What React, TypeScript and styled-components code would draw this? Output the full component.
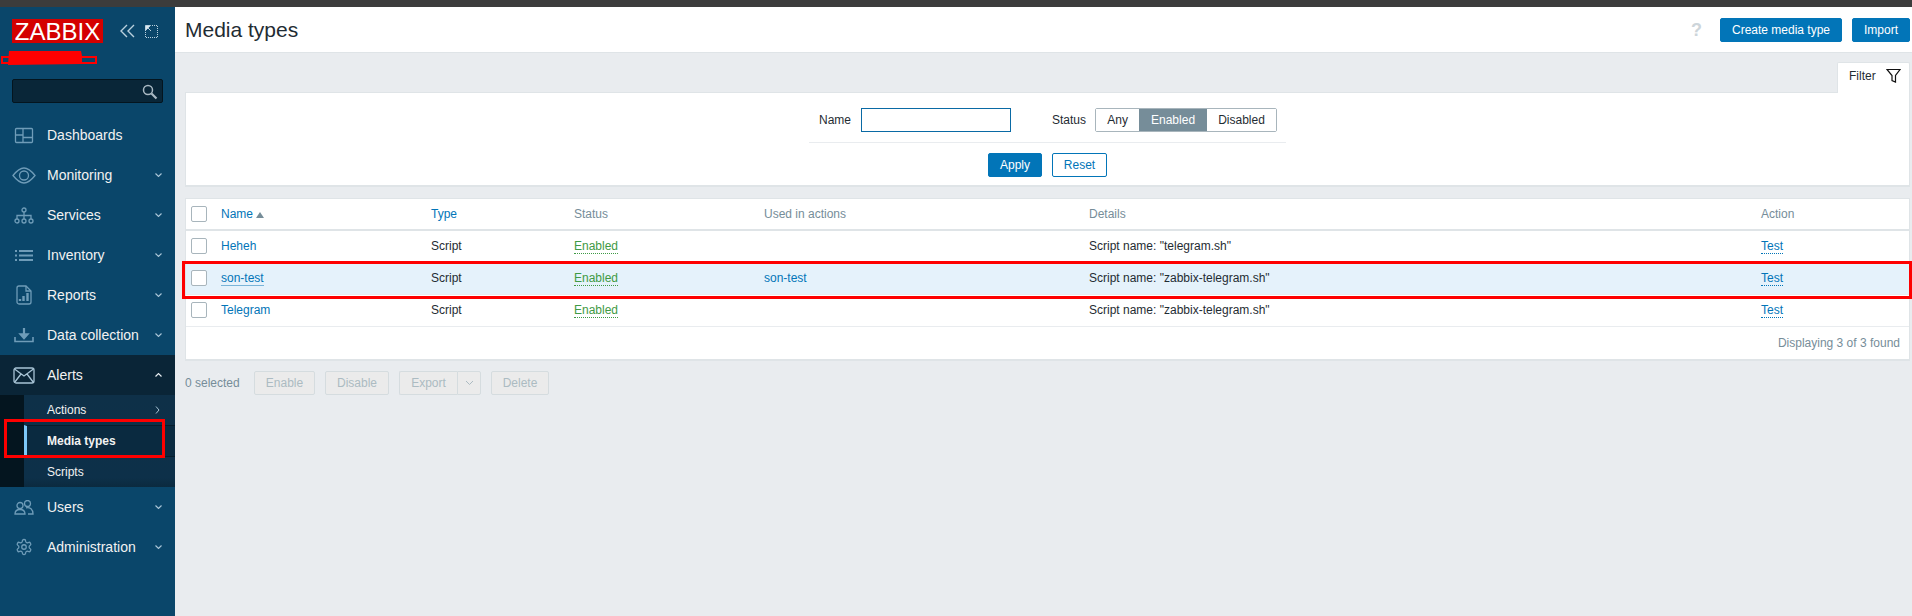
import React from "react";
import styled, { createGlobalStyle } from "styled-components";

const Global = createGlobalStyle`
  html, body { margin: 0; padding: 0; height: 100%; background: #e9ecef; }
  body { font-family: "Liberation Sans", Arial, sans-serif; font-size: 12px; color: #1f2c33; }
  * { box-sizing: border-box; }
`;

const Page = styled.div`
  position: relative;
  width: 1912px;
  height: 616px;
  display: flex;
  flex-direction: column;
  overflow: hidden;
`;
const TopStrip = styled.div`
  height: 7px;
  flex: none;
  background: #3c3c3c;
`;
const Body = styled.div`
  flex: 1;
  display: flex;
  min-height: 0;
`;

/* Sidebar */
const Sidebar = styled.aside`
  width: 175px;
  flex: none;
  background: #0a466a;
  display: flex;
  flex-direction: column;
`;
const Brand = styled.div`
  height: 72px;
  padding: 12px 12px 0;
  display: flex;
  align-items: flex-start;
`;
const Logo = styled.div`
  width: 91px;
  height: 24px;
  background: #d40000;
  color: #fff;
  font-size: 24px;
  line-height: 25px;
  text-align: center;
  flex: none;
`;
const BrandTools = styled.div`
  display: flex;
  align-items: center;
  gap: 10px;
  margin-left: 17px;
  height: 24px;
`;
const Search = styled.div`
  margin: 0 12px;
  width: 151px;
  height: 24px;
  background: #092638;
  border: 1px solid #04151f;
  border-radius: 2px;
  display: flex;
  align-items: center;
  justify-content: flex-end;
  padding-right: 4px;
  flex: none;
`;
const Nav = styled.nav`
  margin-top: 12px;
  display: flex;
  flex-direction: column;
`;
const NavItem = styled.div<{ $open?: boolean }>`
  height: 40px;
  display: flex;
  align-items: center;
  position: relative;
  padding-left: 47px;
  font-size: 14px;
  color: #f2f2f2;
  background: ${(p) => (p.$open ? "#0a2537" : "transparent")};
`;
const NavIcon = styled.span`
  position: absolute;
  left: 12px;
  top: 8px;
  width: 24px;
  height: 24px;
  display: flex;
  align-items: center;
  justify-content: center;
`;
const Chevron = styled.span`
  position: absolute;
  right: 13px;
  top: 50%;
  transform: translateY(-50%);
  display: flex;
`;
const SubChevron = styled(Chevron)`
  right: 15px;
`;
const SubNav = styled.div`
  height: 92px;
  border-left: 24px solid #04151f;
  background: linear-gradient(#0e3048, #0d3049 90%, #0b2a3f);
  display: flex;
  flex-direction: column;
`;
const SubItem = styled.div<{ $active?: boolean }>`
  flex: 1;
  position: relative;
  display: flex;
  align-items: center;
  padding-left: 20px;
  font-size: 12px;
  color: #f2f2f2;
  font-weight: ${(p) => (p.$active ? 700 : 400)};
  background: ${(p) => (p.$active ? "#0a2a40" : "transparent")};
  border-left: 3px solid ${(p) => (p.$active ? "#7cc8f8" : "transparent")};
  ${(p) => p.$active && "border-top: 1px solid #061d2c; border-bottom: 1px solid #061d2c;"}
`;

/* Main */
const Main = styled.main`
  flex: 1;
  min-width: 0;
  display: flex;
  flex-direction: column;
`;
const Header = styled.header`
  height: 46px;
  flex: none;
  background: #fff;
  border-bottom: 1px solid #dfe4e7;
  display: flex;
  align-items: center;
  padding: 1px 2px 0 10px;
`;
const Title = styled.h1`
  margin: 0;
  font-size: 21px;
  font-weight: 400;
  color: #1f2c33;
  flex: 1;
`;
const Help = styled.span`
  color: #cdd5da;
  font-size: 18px;
  font-weight: 700;
  margin-right: 18px;
`;
const HeaderButtons = styled.div`
  display: flex;
  gap: 10px;
`;
const Primary = styled.button<{ $w: number }>`
  width: ${(p) => p.$w}px;
  height: 24px;
  padding: 0;
  background: #0275b8;
  color: #fff;
  border: 1px solid #0275b8;
  border-radius: 2px;
  font: inherit;
`;
const Content = styled.div`
  flex: 1;
  padding: 9px 2px 0 10px;
  display: flex;
  flex-direction: column;
`;
const FilterTabRow = styled.div`
  display: flex;
  justify-content: flex-end;
  height: 31px;
  margin-bottom: -1px;
  position: relative;
  z-index: 1;
`;
const FilterTab = styled.div`
  width: 73px;
  height: 31px;
  background: #fff;
  border: 1px solid #dfe4e7;
  border-bottom: none;
  border-radius: 2px 2px 0 0;
  display: flex;
  align-items: center;
  padding: 0 0 5px 11px;
  gap: 10px;
  color: #1f2c33;
`;
const FilterPanel = styled.section`
  height: 95px;
  background: #fff;
  border: 1px solid #dfe4e7;
  border-bottom-width: 2px;
  display: flex;
  flex-direction: column;
  align-items: center;
  padding-top: 15px;
`;
const FilterForm = styled.div`
  width: 477px;
  height: 35px;
  border-bottom: 1px solid #e9ecef;
  display: flex;
  align-items: flex-start;
  padding-left: 10px;
`;
const FieldLabel = styled.label<{ $gap: number }>`
  line-height: 24px;
  margin-right: ${(p) => p.$gap}px;
`;
const TextBox = styled.div`
  width: 150px;
  height: 24px;
  border: 1px solid #0a6aa5;
  background: #fff;
  margin-right: 41px;
`;
const Segmented = styled.div`
  display: flex;
  height: 24px;
  border: 1px solid #a8b5bc;
  border-radius: 2px;
`;
const Segment = styled.span<{ $on?: boolean; $w: number }>`
  width: ${(p) => p.$w}px;
  line-height: 22px;
  text-align: center;
  background: ${(p) => (p.$on ? "#768d99" : "#fff")};
  color: ${(p) => (p.$on ? "#fff" : "#1f2c33")};
`;
const FilterActions = styled.div`
  display: flex;
  gap: 10px;
  margin-top: 10px;
`;
const Outline = styled.button<{ $w: number }>`
  width: ${(p) => p.$w}px;
  height: 24px;
  padding: 0;
  background: #fff;
  color: #0275b8;
  border: 1px solid #0275b8;
  border-radius: 2px;
  font: inherit;
`;
const TablePanel = styled.section`
  margin-top: 11px;
  background: #fff;
  border: 1px solid #dfe4e7;
  border-bottom-width: 2px;
`;
const Table = styled.table`
  width: 100%;
  table-layout: fixed;
  border-collapse: collapse;
`;
const Th = styled.th<{ $link?: boolean }>`
  height: 31px;
  padding: 0 5px;
  text-align: left;
  font-weight: 400;
  color: ${(p) => (p.$link ? "#0275b8" : "#768d99")};
  border-bottom: 2px solid #dfe4e7;
`;
const Row = styled.tr<{ $hl?: boolean }>`
  height: 32px;
  background: ${(p) => (p.$hl ? "#e5f2fb" : "#fff")};
  border-bottom: 1px solid #e9ecef;
`;
const Td = styled.td`
  padding: 0 5px;
  color: #1f2c33;
`;
const Check = styled.span`
  display: block;
  width: 16px;
  height: 16px;
  background: #fff;
  border: 1px solid #a8b5bc;
  border-radius: 2px;
`;
const SortUp = styled.span`
  display: inline-block;
  margin-left: 3px;
  width: 0;
  height: 0;
  border-left: 4px solid transparent;
  border-right: 4px solid transparent;
  border-bottom: 6px solid #768d99;
`;
const NameLink = styled.a<{ $under?: boolean }>`
  color: #0275b8;
  ${(p) => p.$under && "border-bottom: 1px solid #79b4d8;"}
`;
const Green = styled.span`
  color: #3f9a45;
  border-bottom: 1px dotted #3f9a45;
`;
const DottedLink = styled.a`
  color: #0275b8;
  border-bottom: 1px dotted #0275b8;
`;
const Pager = styled.div`
  height: 32px;
  line-height: 32px;
  padding-right: 9px;
  text-align: right;
  color: #768d99;
`;
const ActionBar = styled.div`
  margin-top: 10px;
  display: flex;
  align-items: center;
  height: 24px;
`;
const Selected = styled.span`
  color: #768d99;
  width: 69px;
`;
const Disabled = styled.button<{ $w: number; $split?: boolean; $join?: boolean }>`
  width: ${(p) => p.$w}px;
  height: 24px;
  padding: 0;
  display: flex;
  align-items: center;
  justify-content: center;
  background: #ebebeb;
  color: #acbbc2;
  border: 1px solid #d5dcdf;
  border-radius: 2px;
  margin-right: ${(p) => (p.$split ? 0 : 10)}px;
  ${(p) => p.$split && "border-right: none; border-radius: 2px 0 0 2px;"}
  ${(p) => p.$join && "border-radius: 0 2px 2px 0;"}
  font: inherit;
`;

/* Overlays: hand-drawn annotations lying over the screenshot */
const RedBox = styled.div<{ $x: number; $y: number; $w: number; $h: number }>`
  position: absolute;
  left: ${(p) => p.$x}px;
  top: ${(p) => p.$y}px;
  width: ${(p) => p.$w}px;
  height: ${(p) => p.$h}px;
  border: 3px solid #fe0000;
  pointer-events: none;
`;
const Scribble = styled.svg`
  position: absolute;
  left: 0;
  top: 48px;
  pointer-events: none;
`;

const st = { fill: "none", stroke: "#6f9cb8", strokeWidth: 1.3 } as const;

const I = {
  dash: (
    <svg width="20" height="17" viewBox="0 0 20 17" {...st}>
      <rect x="1.5" y="1.5" width="17" height="14" rx="1" />
      <path d="M9 1.5v14M1.5 8h7.5M9 10.5h9.5" />
    </svg>
  ),
  eye: (
    <svg width="24" height="17" viewBox="0 0 24 17" {...st}>
      <path d="M1 8.5C5 3.5 8 1 12 1s7 2.500 11 7.500C19 13.500 16 16 12 16S5 13.500 1 8.500z" />
      <circle cx="12" cy="8.500" r="4.500" />
    </svg>
  ),
  services: (
    <svg width="20" height="17" viewBox="0 0 20 17" {...st}>
      <circle cx="10" cy="3" r="2" />
      <circle cx="3" cy="14" r="2" />
      <circle cx="10" cy="14" r="2" />
      <circle cx="17" cy="14" r="2" />
      <path d="M10 5v7M3 12V8.500h14V12" />
    </svg>
  ),
  inventory: (
    <svg width="20" height="13" viewBox="0 0 20 13" fill="#6f9cb8">
      <rect x="1" y="1" width="2" height="2" />
      <rect x="1" y="5.500" width="2" height="2" />
      <rect x="1" y="10" width="2" height="2" />
      <rect x="5" y="1" width="14" height="2" />
      <rect x="5" y="5.500" width="14" height="2" />
      <rect x="5" y="10" width="14" height="2" />
    </svg>
  ),
  reports: (
    <svg width="16" height="20" viewBox="0 0 16 20" {...st}>
      <path d="M3 1h7l5 5v11a2 2 0 0 1-2 2H3a2 2 0 0 1-2-2V3a2 2 0 0 1 2-2z" />
      <path d="M10 1v5h5" />
      <path d="M4 16v-2M7.500 16v-5M11.500 16V8" strokeWidth="2.400" />
    </svg>
  ),
  data: (
    <svg width="20" height="16" viewBox="0 0 20 16" {...st} strokeWidth="1.600">
      <path d="M1 10v4.500h18V10" />
      <path d="M10 1v9.500" strokeWidth="2.200" />
      <path d="M6 7l4 4.500L14 7z" fill="#6f9cb8" />
    </svg>
  ),
  alerts: (
    <svg width="22" height="17" viewBox="0 0 22 17" fill="none" stroke="#a8c4d6" strokeWidth="1.300">
      <rect x="1" y="1" width="20" height="15" rx="2" />
      <path d="M1.500 2L11 9l9.500-7M1.500 15.500L8 7M20.500 15.500L14 7" />
    </svg>
  ),
  users: (
    <svg width="20" height="15" viewBox="0 0 20 15" {...st}>
      <circle cx="6" cy="5.500" r="3" />
      <circle cx="13.500" cy="3.500" r="3" />
      <path d="M1 14c0-3 2-4.500 5-4.500s5 1.500 5 4.500zM12 7.800c4-.8 7 1.500 7 6.200h-5" />
    </svg>
  ),
  gear: (
    <svg width="18" height="18" viewBox="0 0 24 24" fill="none" stroke="#6f9cb8" strokeWidth="1.700">
      <path d="M12.220 2h-.44a2 2 0 0 0-2 2v.18a2 2 0 0 1-1 1.730l-.43.250a2 2 0 0 1-2 0l-.15-.08a2 2 0 0 0-2.730.730l-.22.380a2 2 0 0 0 .730 2.730l.15.100a2 2 0 0 1 1 1.720v.510a2 2 0 0 1-1 1.740l-.15.090a2 2 0 0 0-.730 2.730l.22.380a2 2 0 0 0 2.730.730l.15-.08a2 2 0 0 1 2 0l.43.250a2 2 0 0 1 1 1.730V20a2 2 0 0 0 2 2h.44a2 2 0 0 0 2-2v-.18a2 2 0 0 1 1-1.730l.43-.250a2 2 0 0 1 2 0l.15.080a2 2 0 0 0 2.730-.730l.22-.390a2 2 0 0 0-.730-2.730l-.15-.080a2 2 0 0 1-1-1.740v-.500a2 2 0 0 1 1-1.740l.15-.090a2 2 0 0 0 .730-2.730l-.22-.380a2 2 0 0 0-2.730-.730l-.15.080a2 2 0 0 1-2 0l-.43-.250a2 2 0 0 1-1-1.730V4a2 2 0 0 0-2-2z" />
      <circle cx="12" cy="12" r="3" />
    </svg>
  ),
};

const Down = () => (
  <svg width="7" height="5" viewBox="0 0 7 5" fill="none" stroke="#a8c4d6" strokeWidth="1.200">
    <path d="M.5 1l3 3 3-3" />
  </svg>
);
const Up = () => (
  <svg width="7" height="5" viewBox="0 0 7 5" fill="none" stroke="#e8eef2" strokeWidth="1.200">
    <path d="M.5 4l3-3 3 3" />
  </svg>
);

const items: [string, React.ReactNode, boolean][] = [
  ["Dashboards", I.dash, false],
  ["Monitoring", I.eye, true],
  ["Services", I.services, true],
  ["Inventory", I.inventory, true],
  ["Reports", I.reports, true],
  ["Data collection", I.data, true],
];

const rows = [
  { name: "Heheh", script: "telegram.sh", used: "" },
  { name: "son-test", script: "zabbix-telegram.sh", used: "son-test", hl: true },
  { name: "Telegram", script: "zabbix-telegram.sh", used: "" },
];

export default function App() {
  return (
    <Page>
      <Global />
      <TopStrip />
      <Body>
        <Sidebar>
          <Brand>
            <Logo>ZABBIX</Logo>
            <BrandTools>
              <svg width="15" height="14" viewBox="0 0 15 14" fill="none" stroke="#b9d0de" strokeWidth="1.400">
                <path d="M7 1L1 7l6 6M14 1L8 7l6 6" />
              </svg>
              <svg width="13" height="13" viewBox="0 0 13 13" fill="none" stroke="#b9d0de" strokeWidth="1">
                <path d="M.5 5v7.500H12.500V.5H7" strokeDasharray="1 1" />
                <path d="M.5.500H5.500L.5 5.500z" fill="#dce8ef" />
                <path d="M3 3l3 3" />
              </svg>
            </BrandTools>
          </Brand>
          <Search>
            <svg width="17" height="17" viewBox="0 0 17 17" fill="none" stroke="#a9b9c3" strokeWidth="1.500">
              <circle cx="7" cy="7" r="4.500" />
              <path d="M10.500 10.500l5 5" strokeWidth="2.200" />
            </svg>
          </Search>
          <Nav>
            {items.map(([label, icon, more]) => (
              <NavItem key={label}>
                <NavIcon>{icon}</NavIcon>
                {label}
                {more && (
                  <Chevron>
                    <Down />
                  </Chevron>
                )}
              </NavItem>
            ))}
            <NavItem $open>
              <NavIcon>{I.alerts}</NavIcon>
              Alerts
              <Chevron>
                <Up />
              </Chevron>
            </NavItem>
            <SubNav>
              <SubItem>
                Actions
                <SubChevron>
                  <svg width="5" height="8" viewBox="0 0 5 8" fill="none" stroke="#a8c4d6" strokeWidth="1">
                    <path d="M1 .5l3 3.500-3 3.500" />
                  </svg>
                </SubChevron>
              </SubItem>
              <SubItem $active>Media types</SubItem>
              <SubItem>Scripts</SubItem>
            </SubNav>
            <NavItem>
              <NavIcon>{I.users}</NavIcon>
              Users
              <Chevron>
                <Down />
              </Chevron>
            </NavItem>
            <NavItem>
              <NavIcon>{I.gear}</NavIcon>
              Administration
              <Chevron>
                <Down />
              </Chevron>
            </NavItem>
          </Nav>
        </Sidebar>
        <Main>
          <Header>
            <Title>Media types</Title>
            <Help>?</Help>
            <HeaderButtons>
              <Primary $w={122}>Create media type</Primary>
              <Primary $w={58}>Import</Primary>
            </HeaderButtons>
          </Header>
          <Content>
            <FilterTabRow>
              <FilterTab>
                Filter
                <svg width="15" height="15" viewBox="0 0 15 15" fill="none" stroke="#111" strokeWidth="1.200">
                  <path d="M1 1.500h13L9.500 7.500V14L6 12.500V7.500z" />
                </svg>
              </FilterTab>
            </FilterTabRow>
            <FilterPanel>
              <FilterForm>
                <FieldLabel $gap={10}>Name</FieldLabel>
                <TextBox />
                <FieldLabel $gap={9}>Status</FieldLabel>
                <Segmented>
                  <Segment $w={43}>Any</Segment>
                  <Segment $on $w={68}>Enabled</Segment>
                  <Segment $w={69}>Disabled</Segment>
                </Segmented>
              </FilterForm>
              <FilterActions>
                <Primary $w={54}>Apply</Primary>
                <Outline $w={55}>Reset</Outline>
              </FilterActions>
            </FilterPanel>
            <TablePanel>
              <Table>
                <colgroup>
                  <col width="30" />
                  <col width="210" />
                  <col width="143" />
                  <col width="190" />
                  <col width="325" />
                  <col width="672" />
                  <col />
                </colgroup>
                <thead>
                  <tr>
                    <Th><Check /></Th>
                    <Th $link>Name<SortUp /></Th>
                    <Th $link>Type</Th>
                    <Th>Status</Th>
                    <Th>Used in actions</Th>
                    <Th>Details</Th>
                    <Th>Action</Th>
                  </tr>
                </thead>
                <tbody>
                  {rows.map((r) => (
                    <Row key={r.name} $hl={r.hl}>
                      <Td><Check /></Td>
                      <Td><NameLink $under={r.hl}>{r.name}</NameLink></Td>
                      <Td>Script</Td>
                      <Td><Green>Enabled</Green></Td>
                      <Td><NameLink>{r.used}</NameLink></Td>
                      <Td>Script name: "{r.script}"</Td>
                      <Td><DottedLink>Test</DottedLink></Td>
                    </Row>
                  ))}
                </tbody>
              </Table>
              <Pager>Displaying 3 of 3 found</Pager>
            </TablePanel>
            <ActionBar>
              <Selected>0 selected</Selected>
              <Disabled $w={61}>Enable</Disabled>
              <Disabled $w={64}>Disable</Disabled>
              <Disabled $w={58} $split>Export</Disabled>
              <Disabled $w={24} $join>
                <svg width="9" height="6" viewBox="0 0 9 6" fill="none" stroke="#acbbc2" strokeWidth="1">
                  <path d="M1 1l3.500 3.500L8 1" />
                </svg>
              </Disabled>
              <Disabled $w={58}>Delete</Disabled>
            </ActionBar>
          </Content>
        </Main>
      </Body>
      <Scribble width="100" height="20" viewBox="0 0 100 20">
        <path d="M9 3h72l1 5 0 8-74 1z" fill="#fe0000" />
        <path d="M2 9H96V15H2z" fill="none" stroke="#fe0000" strokeWidth="2" />
      </Scribble>
      <RedBox $x={4} $y={419} $w={161} $h={39} />
      <RedBox $x={182} $y={261} $w={1730} $h={38} />
    </Page>
  );
}
